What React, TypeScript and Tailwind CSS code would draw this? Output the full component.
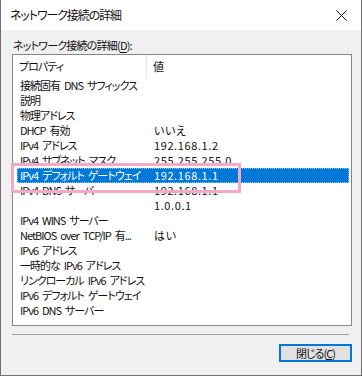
import React from 'react';

type Row = { name: string; value?: string; selected?: boolean };

const ROWS: Row[] = [
  { name: '接続固有 DNS サフィックス' },
  { name: '説明' },
  { name: '物理アドレス' },
  { name: 'DHCP 有効', value: 'いいえ' },
  { name: 'IPv4 アドレス', value: '192.168.1.2' },
  { name: 'IPv4 サブネット マスク', value: '255.255.255.0' },
  { name: 'IPv4 デフォルト ゲートウェイ', value: '192.168.1.1', selected: true },
  { name: 'IPv4 DNS サーバー', value: '192.168.1.1' },
  { name: '', value: '1.0.0.1' },
  { name: 'IPv4 WINS サーバー' },
  { name: 'NetBIOS over TCP/IP 有...', value: 'はい' },
  { name: 'IPv6 アドレス' },
  { name: '一時的な IPv6 アドレス' },
  { name: 'リンクローカル IPv6 アドレス' },
  { name: 'IPv6 デフォルト ゲートウェイ' },
  { name: 'IPv6 DNS サーバー' },
];

export default function App() {
  return (
    <div
      className="relative w-[362px] h-[376px] bg-[#f0f0f0] border-x border-b border-[#6f6f6f] flex flex-col text-[#111] [font-feature-settings:'palt']"
      style={{ fontFamily: '"Noto Sans CJK JP", "Noto Sans", sans-serif' }}
    >
      {/* Title bar */}
      <div className="h-[30px] bg-white flex items-center justify-between pl-[9px] pr-[9px] shrink-0">
        <span className="text-[12px] leading-none tracking-[-1.1px]">ネットワーク接続の詳細</span>
        <svg width="11" height="11" viewBox="0 0 11 11" className="mr-[5px]">
          <path d="M0.5 0.5 L10.5 10.5 M10.5 0.5 L0.5 10.5" stroke="#111" strokeWidth="1" fill="none" />
        </svg>
      </div>

      {/* Body */}
      <div className="flex-1 flex flex-col pl-[11px] text-[11px] tracking-[-1px] [word-spacing:2.5px]">
        <div className="pt-[8px] h-[24px] leading-[14px] pl-px tracking-[-0.8px]">
          ネットワーク接続の詳細(<span className="underline underline-offset-2">D</span>):
        </div>

        {/* List view */}
        <div className="w-[340px] h-[272px] border border-[#828790] bg-white flex flex-col overflow-hidden">
          <div className="h-[23px] flex items-stretch shrink-0">
            <div className="w-[134px] pl-[6px] flex items-center border-r border-[#e5e5e5]">プロパティ</div>
            <div className="pl-[6px] flex items-center">値</div>
          </div>
          <div className="flex flex-col">
            {ROWS.map((r, i) => (
              <div
                key={i}
                className={
                  'h-[15px] ml-[4px] mr-[2px] flex items-center leading-none whitespace-nowrap ' +
                  (r.selected
                    ? 'bg-[#0078d7] text-white outline-1 outline-dotted outline-[#9cc6ee] -outline-offset-1'
                    : '')
                }
              >
                <div className="w-[134px] shrink-0 pl-[3px]">{r.name}</div>
                <div className="pl-[3px] tracking-[0.6px]">{r.value}</div>
              </div>
            ))}
          </div>
        </div>

        {/* Separator */}
        <div className="mt-[8px] w-[337px] h-px bg-[#a0a0a0]" />

        {/* Close button */}
        <div className="flex justify-end pr-[9px] mt-[9px]">
          <button className="w-[73px] h-[18px] border-2 border-[#0078d7] bg-[#e1e1e1] leading-none flex items-center justify-center">
            閉じる(<span className="underline underline-offset-1">C</span>)
          </button>
        </div>
      </div>

      {/* Pink annotation box */}
      <div className="absolute left-[10px] top-[163px] w-[230px] h-[30px] border-[3px] border-[#f4a9c6] pointer-events-none" />
    </div>
  );
}
